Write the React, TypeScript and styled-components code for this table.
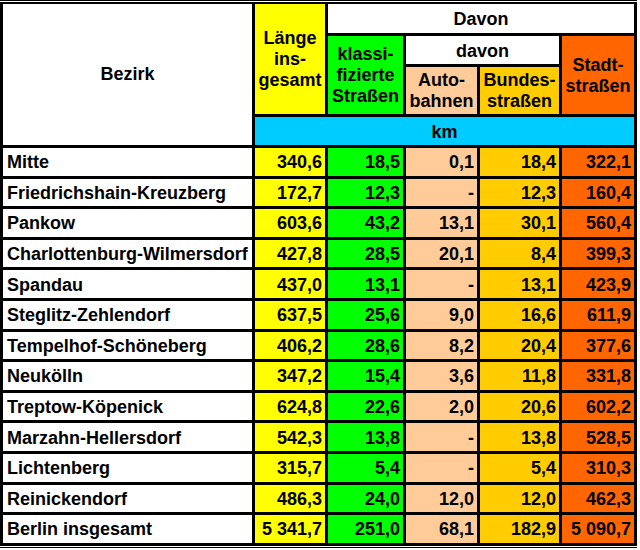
import React from "react";
import styled, { createGlobalStyle } from "styled-components";

const Global = createGlobalStyle`
  html, body { margin: 0; padding: 0; background: #ffffff; }
  body { font-family: "Liberation Sans", Arial, sans-serif; }
`;

const Frame = styled.div`
  width: 637px;
  border-top: 1px solid #000;
  border-bottom: 1px solid #000;
  padding: 1px 0;
  background: #fff;
`;

const Grid = styled.div`
  display: grid;
  grid-template-columns: 249px 70px 75px 71px 79px 72px;
  grid-template-rows: 29px 28px 47px 28px repeat(13, 27.6px);
  gap: 3px;
  padding: 2px 3px 3px 3px;
  background: #000;
  font-family: "Liberation Sans", Arial, sans-serif;
  font-weight: bold;
  font-size: 18px;
  color: #000;
`;

const Cell = styled.div<{
  $bg?: string;
  $align?: "left" | "right" | "center";
  $col?: string;
  $row?: string;
  $drop?: number;
}>`
  background: ${(p) => p.$bg ?? "#ffffff"};
  grid-column: ${(p) => p.$col ?? "auto"};
  grid-row: ${(p) => p.$row ?? "auto"};
  display: flex;
  align-items: center;
  justify-content: ${(p) => (p.$align === "left" ? "flex-start" : p.$align === "center" ? "center" : "flex-end")};
  padding-top: ${(p) => p.$drop ?? 2}px;
  padding-left: ${(p) => (p.$align === "left" ? 4 : 0)}px;
  padding-right: ${(p) => (p.$align === "right" || !p.$align ? 3 : 0)}px;
  white-space: nowrap;
  overflow: hidden;
`;

const HeadText = styled.span`
  display: block;
  text-align: center;
  line-height: 21px;
  white-space: pre-line;
`;

const C = {
  white: "#ffffff",
  yellow: "#ffff00",
  green: "#00ff00",
  peach: "#ffcc99",
  gold: "#ffcc00",
  orange: "#ff6600",
  cyan: "#00ccff",
};

const rows: [string, string, string, string, string, string][] = [
  ["Mitte", "340,6", "18,5", "0,1", "18,4", "322,1"],
  ["Friedrichshain-Kreuzberg", "172,7", "12,3", "-", "12,3", "160,4"],
  ["Pankow", "603,6", "43,2", "13,1", "30,1", "560,4"],
  ["Charlottenburg-Wilmersdorf", "427,8", "28,5", "20,1", "8,4", "399,3"],
  ["Spandau", "437,0", "13,1", "-", "13,1", "423,9"],
  ["Steglitz-Zehlendorf", "637,5", "25,6", "9,0", "16,6", "611,9"],
  ["Tempelhof-Schöneberg", "406,2", "28,6", "8,2", "20,4", "377,6"],
  ["Neukölln", "347,2", "15,4", "3,6", "11,8", "331,8"],
  ["Treptow-Köpenick", "624,8", "22,6", "2,0", "20,6", "602,2"],
  ["Marzahn-Hellersdorf", "542,3", "13,8", "-", "13,8", "528,5"],
  ["Lichtenberg", "315,7", "5,4", "-", "5,4", "310,3"],
  ["Reinickendorf", "486,3", "24,0", "12,0", "12,0", "462,3"],
  ["Berlin insgesamt", "5 341,7", "251,0", "68,1", "182,9", "5 090,7"],
];

const colors = [C.yellow, C.green, C.peach, C.gold, C.orange];

export default function App() {
  return (
    <>
      <Global />
      <Frame>
        <Grid>
          <Cell $align="center" $col="1" $row="1 / 5" $drop={0}>
            <HeadText>Bezirk</HeadText>
          </Cell>
          <Cell $align="center" $bg={C.yellow} $col="2" $row="1 / 4" $drop={1}>
            <HeadText>{"Länge\nins-\ngesamt"}</HeadText>
          </Cell>
          <Cell $align="center" $col="3 / 7" $row="1">
            <HeadText>Davon</HeadText>
          </Cell>
          <Cell $align="center" $bg={C.green} $col="3" $row="2 / 4" $drop={0}>
            <HeadText>{"klassi-\nfizierte\nStraßen"}</HeadText>
          </Cell>
          <Cell $align="center" $col="4 / 6" $row="2">
            <HeadText>davon</HeadText>
          </Cell>
          <Cell $align="center" $bg={C.orange} $col="6" $row="2 / 4" $drop={1}>
            <HeadText>{"Stadt-\nstraßen"}</HeadText>
          </Cell>
          <Cell $align="center" $bg={C.peach} $col="4" $row="3" $drop={1}>
            <HeadText>{"Auto-\nbahnen"}</HeadText>
          </Cell>
          <Cell $align="center" $bg={C.gold} $col="5" $row="3" $drop={1}>
            <HeadText>{"Bundes-\nstraßen"}</HeadText>
          </Cell>
          <Cell $align="center" $bg={C.cyan} $col="2 / 7" $row="4">
            <HeadText>km</HeadText>
          </Cell>
          {rows.map((r) => (
            <React.Fragment key={r[0]}>
              <Cell $align="left">{r[0]}</Cell>
              {r.slice(1).map((v, i) => (
                <Cell key={i} $bg={colors[i]}>
                  {v}
                </Cell>
              ))}
            </React.Fragment>
          ))}
        </Grid>
      </Frame>
    </>
  );
}
